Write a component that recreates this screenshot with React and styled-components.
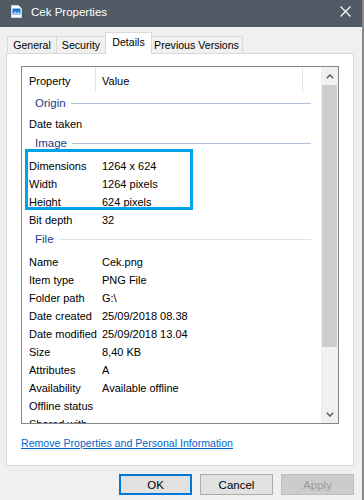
import React from 'react'
import styled, { createGlobalStyle } from 'styled-components'

const GlobalStyle = createGlobalStyle`
  html, body {
    margin: 0;
    padding: 0;
    background: #f0f0f0;
  }
  * {
    box-sizing: border-box;
  }
`

const Window = styled.div`
  width: 364px;
  height: 500px;
  background: #f0f0f0;
  font-family: "Liberation Sans", Arial, sans-serif;
  font-size: 11px;
  color: #000;
  display: flex;
  flex-direction: column;
  overflow: hidden;
  border-right: 2px solid #8a8a8a;
`
const TitleBar = styled.div`
  height: 27px;
  flex-shrink: 0;
  background: #505b66;
  display: flex;
  align-items: center;
  padding: 0 11px 4px 11px;
  color: #fff;
`
const TitleText = styled.div`
  font-size: 11.5px;
  margin-left: 9px;
  flex: 1;
`
const Body = styled.div`
  flex: 1;
  display: flex;
  flex-direction: column;
  padding: 6px 8px 0 6px;
`
const TabStrip = styled.div`
  display: flex;
  align-items: flex-end;
  height: 21px;
  padding-left: 1px;
  position: relative;
  z-index: 1;
`
const Tab = styled.div`
  width: ${p => p.$w + (p.$active ? 2 : 0)}px;
  height: ${p => (p.$active ? '22px' : '18px')};
  padding-bottom: ${p => (p.$active ? '3px' : '0')};
  margin: ${p => (p.$active ? '0 -1px' : '0')};
  background: ${p => (p.$active ? '#fff' : '#f0f0f0')};
  border: 1px solid #d9d9d9;
  border-bottom: ${p => (p.$active ? 'none' : '1px solid #d9d9d9')};
  border-left: ${p => (p.$left || p.$active ? '1px solid #d9d9d9' : 'none')};
  display: flex;
  align-items: center;
  justify-content: center;
  white-space: nowrap;
  font-size: 10.6px;
  position: relative;
  z-index: ${p => (p.$active ? 2 : 1)};
`
const Panel = styled.div`
  margin-top: -1px;
  height: 413px;
  background: #fff;
  border: 1px solid #d9d9d9;
  padding: 12px 14px 0 14px;
  display: flex;
  flex-direction: column;
`
const ListBox = styled.div`
  height: 358px;
  border: 1px solid #828790;
  display: flex;
  overflow: hidden;
`
const ListContent = styled.div`
  flex: 1;
  position: relative;
  overflow: hidden;
`
const HeaderRow = styled.div`
  height: 25px;
  display: flex;
  align-items: center;
`
const HeaderCell = styled.div`
  height: 100%;
  display: flex;
  align-items: center;
  padding-top: 3px;
  padding-left: ${p => p.$pad}px;
  width: ${p => p.$width}px;
  border-right: ${p => (p.$sep ? '1px solid #e5e5e5' : 'none')};
`
const GroupRow = styled.div`
  height: ${p => (p.$first ? '21px' : '24px')};
  padding-top: ${p => (p.$first ? '1px' : '0')};
  display: flex;
  align-items: center;
  padding-left: 13px;
  padding-right: 10px;
  color: #1e3c8c;
  font-size: 11.5px;
`
const GroupLine = styled.div`
  flex: 1;
  height: 1px;
  margin-left: 5px;
  margin-top: 1px;
  background: ${p => (p.$light ? '#dbe3f0' : '#b3c1df')};
`
const Row = styled.div`
  height: 18px;
  padding-top: 4px;
  display: grid;
  grid-template-columns: 73px 1fr;
  align-items: center;
  padding-left: 7px;
  white-space: nowrap;
`
const Highlight = styled.div`
  position: absolute;
  left: 3px;
  top: 82px;
  width: 168px;
  height: 61px;
  border: 3px solid #00a3e8;
  pointer-events: none;
`
const ScrollBar = styled.div`
  width: 17px;
  background: #f0f0f0;
  display: flex;
  flex-direction: column;
`
const ScrollArrow = styled.div`
  height: 18px;
  display: flex;
  align-items: center;
  justify-content: center;
`
const Thumb = styled.div`
  height: 262px;
  margin: 0 1px;
  background: #cdcdcd;
`
const Track = styled.div`
  flex: 1;
`
const Link = styled.a`
  margin-top: 13px;
  color: #0066cc;
  text-decoration: underline;
  font-size: 10.6px;
  cursor: pointer;
`
const ButtonRow = styled.div`
  display: flex;
  justify-content: flex-end;
  gap: 8px;
  padding-top: 8px;
`
const Button = styled.div`
  width: 73px;
  height: 21px;
  display: flex;
  align-items: center;
  justify-content: center;
  background: ${p => (p.$disabled ? '#cccccc' : '#e1e1e1')};
  color: ${p => (p.$disabled ? '#9a9a9a' : '#000')};
  border: ${p =>
    p.$default ? '2px solid #0078d7' : p.$disabled ? '1px solid #bfbfbf' : '1px solid #adadad'};
  font-size: 11.5px;
`

const FileIcon = () => (
  <svg width="11" height="13" viewBox="0 0 11 13">
    <path d="M0.5 0.5 H7.5 L10.5 3.5 V12.5 H0.5 Z" fill="#fff" stroke="#d0d8e0" />
    <rect x="1.5" y="3.5" width="8" height="6" fill="#1e78d2" />
    <path d="M1.5 9.5 L4 6 L6 8 L7.5 6.5 L9.5 9.5 Z" fill="#9fd0f5" />
  </svg>
)

const CloseIcon = () => (
  <svg width="11" height="11" viewBox="0 0 11 11">
    <path d="M0.5 0.5 L10.5 10.5 M10.5 0.5 L0.5 10.5" stroke="#fff" strokeWidth="1.1" />
  </svg>
)

const Chevron = ({ down }) => (
  <svg width="8" height="5" viewBox="0 0 8 5">
    <path
      d={down ? 'M0.8 0.8 L4 4 L7.2 0.8' : 'M0.8 4.2 L4 1 L7.2 4.2'}
      stroke="#606060"
      strokeWidth="1.6"
      fill="none"
    />
  </svg>
)

const groups = [
  { name: 'Origin', rows: [['Date taken', '']] },
  {
    name: 'Image',
    rows: [
      ['Dimensions', '1264 x 624'],
      ['Width', '1264 pixels'],
      ['Height', '624 pixels'],
      ['Bit depth', '32'],
    ],
  },
  {
    name: 'File',
    light: true,
    rows: [
      ['Name', 'Cek.png'],
      ['Item type', 'PNG File'],
      ['Folder path', 'G:\\'],
      ['Date created', '25/09/2018 08.38'],
      ['Date modified', '25/09/2018 13.04'],
      ['Size', '8,40 KB'],
      ['Attributes', 'A'],
      ['Availability', 'Available offline'],
      ['Offline status', ''],
      ['Shared with', ''],
    ],
  },
]

const tabs = [
  ['General', 50],
  ['Security', 49],
  ['Details', 45],
  ['Previous Versions', 92],
]

const App = () => {
  return (
    <Window>
      <GlobalStyle />
      <TitleBar>
        <FileIcon />
        <TitleText>Cek Properties</TitleText>
        <CloseIcon />
      </TitleBar>
      <Body>
        <TabStrip>
          {tabs.map(([t, w], i) => (
            <Tab key={t} $w={w} $active={t === 'Details'} $left={i === 0}>
              {t}
            </Tab>
          ))}
        </TabStrip>
        <Panel>
          <ListBox>
            <ListContent>
              <HeaderRow>
                <HeaderCell $pad={7} $width={74} $sep>Property</HeaderCell>
                <HeaderCell $pad={6} $width={207} $sep>Value</HeaderCell>
              </HeaderRow>
              {groups.map((g, gi) => (
                <React.Fragment key={g.name}>
                  <GroupRow $first={gi === 0}>
                    {g.name}
                    <GroupLine $light={g.light} />
                  </GroupRow>
                  {g.rows.map(([k, v]) => (
                    <Row key={k}>
                      <span>{k}</span>
                      <span>{v}</span>
                    </Row>
                  ))}
                </React.Fragment>
              ))}
              <Highlight />
            </ListContent>
            <ScrollBar>
              <ScrollArrow>
                <Chevron />
              </ScrollArrow>
              <Thumb />
              <Track />
              <ScrollArrow>
                <Chevron down />
              </ScrollArrow>
            </ScrollBar>
          </ListBox>
          <Link>Remove Properties and Personal Information</Link>
        </Panel>
        <ButtonRow>
          <Button $default>OK</Button>
          <Button>Cancel</Button>
          <Button $disabled>Apply</Button>
        </ButtonRow>
      </Body>
    </Window>
  )
}

export default App
